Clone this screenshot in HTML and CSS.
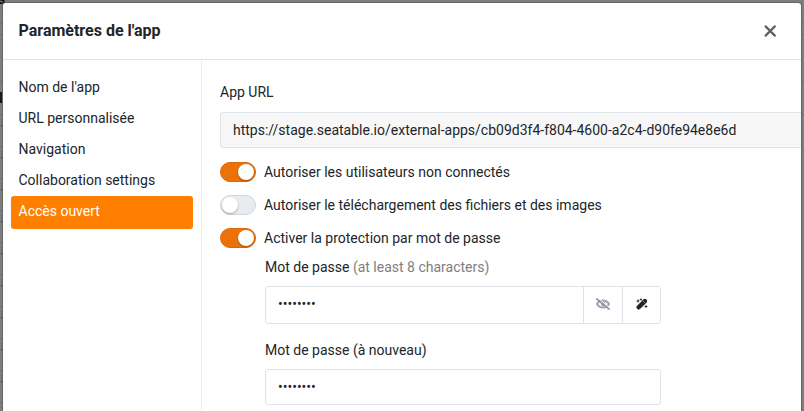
FILE: index.html
```html
<!DOCTYPE html>
<html lang="fr">
<head>
<meta charset="utf-8">
<title>Paramètres de l'app</title>
<link rel="stylesheet" href="styles.css">
</head>
<body>
<div class="backdrop" aria-hidden="true"><span class="peek peek-s">s</span><span class="peek peek-n">N</span><div class="ticks"></div></div>
<section class="modal">
  <header class="modal-header">
    <h1>Paramètres de l'app</h1>
    <button class="close" aria-label="Fermer"><svg width="14" height="14" viewBox="0 0 14 14"><path d="M2.600 2.400 11.800 11.600M11.800 2.400 2.600 11.600" stroke="#606060" stroke-width="2.200" stroke-linecap="round"/></svg></button>
  </header>
  <div class="modal-body">
    <nav class="sidebar">
      <a class="item">Nom de l'app</a>
      <a class="item">URL personnalisée</a>
      <a class="item">Navigation</a>
      <a class="item">Collaboration settings</a>
      <a class="item active">Accès ouvert</a>
    </nav>
    <main class="content">
      <label class="label">App URL</label>
      <div class="field url">https://stage.seatable.io/external-apps/cb09d3f4-f804-4600-a2c4-d90fe94e8e6d</div>
      <div class="switch-row"><span class="switch on"></span><span>Autoriser les utilisateurs non connectés</span></div>
      <div class="switch-row"><span class="switch"></span><span>Autoriser le téléchargement des fichiers et des images</span></div>
      <div class="switch-row"><span class="switch on"></span><span>Activer la protection par mot de passe</span></div>
      <div class="passwords">
        <label class="label">Mot de passe <span class="tip">(at least 8 characters)</span></label>
        <div class="group">
          <div class="value">••••••••</div>
          <button class="addon" aria-label="Afficher"><svg width="14" height="12" viewBox="0 0 14 12"><path d="M1 6C2.300 3.600 4.400 2.400 7 2.400s4.700 1.200 6 3.600C11.700 8.400 9.600 9.600 7 9.600S2.300 8.400 1 6Z" fill="none" stroke="#9ea4ae" stroke-width="2"/><circle cx="7.300" cy="6" r="2.400" fill="#9ea4ae"/><path d="M2 .2 14 10" stroke="#fff" stroke-width="1"/><path d="M.8 1 13.200 11.200" stroke="#9298a3" stroke-width="1.700" stroke-linecap="round"/></svg></button>
          <button class="addon" aria-label="Générer"><svg width="12" height="12" viewBox="0 0 12 12"><path d="M2.700 9.300 8.900 3.100" stroke="#212529" stroke-width="4.400" stroke-linecap="round"/><path d="m7.200 3.100 1.700 1.700" stroke="#bbb" stroke-width=".7"/><path d="M2 .8 2.600 2.400 4.200 3 2.600 3.600 2 5.200 1.400 3.600-.2 3 1.400 2.400ZM5 0l.5 1.100L6.600 1.600l-1.100.5L5 3.200l-.5-1.100L3.400 1.600l1.100-.5ZM10 6.400l.6 1.500 1.500.6-1.500.6-.6 1.500-.6-1.500L7.900 8.500 9.400 7.900Z" fill="#212529"/></svg></button>
        </div>
        <label class="label again">Mot de passe (à nouveau)</label>
        <div class="field pass">••••••••</div>
      </div>
    </main>
  </div>
</section>
</body>
</html>
```
FILE: styles.css
```css
* { box-sizing: border-box; }
body {
  margin: 0;
  height: 411px;
  overflow: hidden;
  padding: 3px 3px 0;
  background: #7d7d7d;
  font: 14px/21px Roboto, "Liberation Sans", sans-serif;
  color: #212529;
}
button { border: 0; padding: 0; background: none; }
.backdrop {
  position: absolute;
  inset: 0;
  overflow: hidden;
  background:
    linear-gradient(#6d6d6d, #6d6d6d) 0 23px / 100% 1px no-repeat,
    linear-gradient(#6d6d6d, #6d6d6d) 0 34px / 100% 1px no-repeat,
    linear-gradient(#6d6d6d, #6d6d6d) 0 81px / 100% 1px no-repeat,
    linear-gradient(#6d6d6d, #6d6d6d) 0 114px / 100% 1px no-repeat;
}
.peek { position: absolute; font-weight: 700; line-height: 16px; color: #111; }
.peek-s { left: -2px; top: -9px; }
.peek-n { left: -7px; top: 90px; }
.ticks {
  position: absolute;
  left: 0;
  top: 114px;
  width: 3px;
  height: 297px;
  background:
    repeating-linear-gradient(transparent 0 11px, #333 11px 12px, transparent 12px 32px) 1px 0 / 1px 100% no-repeat,
    repeating-linear-gradient(#6d6d6d 0 1px, transparent 1px 32px);
}
.modal {
  position: relative;
  height: 408px;
  background: #fff;
  border-radius: 3px 3px 0 0;
  overflow: hidden;
  box-shadow: 0 0 0 1px #666;
}
.modal-header {
  display: flex;
  align-items: center;
  justify-content: space-between;
  height: 57px;
  padding: 0 24px 0 15.5px;
  border-bottom: 1px solid #dfe2ea;
}
h1 { margin: 0; font-size: 16px; line-height: 24px; font-weight: 700; }
.close { height: 14px; line-height: 0; }
.modal-body { display: flex; height: 351px; }
.sidebar { width: 199px; padding: 12px 8px; border-right: 1px solid #ececec; }
.item { display: block; height: 31px; padding: 4px 7.5px; line-height: 23px; }
.active { height: 33px; background: #ff8000; color: #fff; border-radius: 3px; }
.content { flex: 1; min-width: 0; padding: 22px 0 0 18px; }
.label { display: block; }
.field {
  display: flex;
  align-items: center;
  height: 36px;
  padding: 0 12px;
  border: 1px solid #dee2ea;
  border-radius: 3px;
}
.url { width: 620px; margin: 9px 0 8px; background: #f7f7f7; }
.switch-row { display: flex; align-items: center; height: 33px; gap: 8px; }
.switch {
  width: 36px;
  height: 20px;
  margin-bottom: 2px;
  border: 1px solid #d2d6df;
  border-radius: 10px;
  background: #e9ecef;
}
.switch::before {
  content: "";
  display: block;
  width: 16px;
  height: 16px;
  margin: 1px;
  border-radius: 50%;
  background: #fff;
  box-shadow: 0 1px 2px rgba(0, 0, 0, .3);
}
.on { background: #ed7109; border-color: #d8690c; }
.on::before { margin-left: 17px; }
.passwords { width: 396px; margin: 2px 0 0 45px; }
.tip { color: #808080; }
.group {
  display: flex;
  height: 38px;
  margin: 8px 0 16px;
  border: 1px solid #dee2ea;
  border-radius: 3px;
}
.value { flex: 1; padding-left: 12px; line-height: 34px; }
.addon {
  display: flex;
  align-items: center;
  justify-content: center;
  width: 39px;
  padding-bottom: 2px;
  border-left: 1px solid #dee2ea;
}
.addon:last-child { width: 38px; }
.pass { margin-top: 8px; }
```
